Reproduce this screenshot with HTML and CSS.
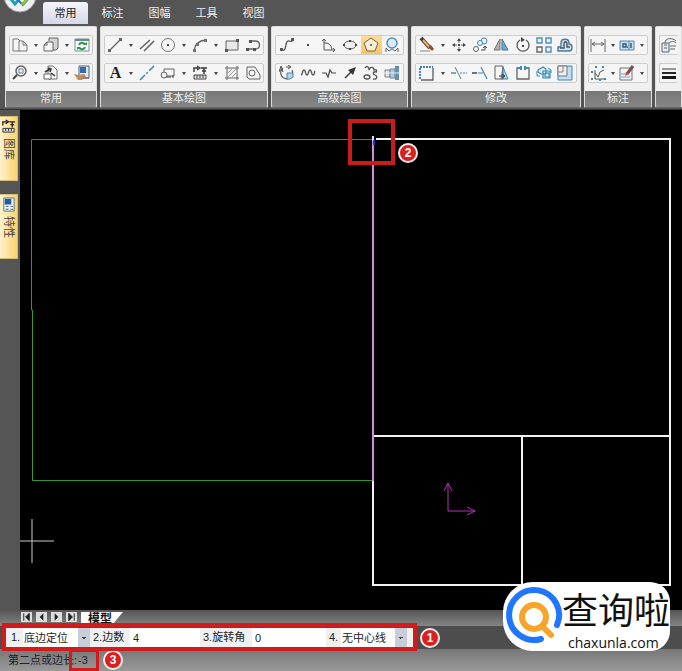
FILE: index.html
```html
<!DOCTYPE html>
<html lang="zh-CN">
<head>
<meta charset="utf-8">
<title>CAD</title>
<link rel="stylesheet" href="styles.css">
</head>
<body>
<div class="app">
<header class="topbar">
  <svg class="logo" viewBox="0 0 42 14" aria-hidden="true">
    <circle cx="20" cy="-4" r="16" fill="#eef0f1" stroke="#999" stroke-width="1"/>
    <path d="M10-2l5 6 6-7" fill="none" stroke="#1c9fc4" stroke-width="3"/>
    <path d="M16-2l7 7 7-8" fill="none" stroke="#2878b8" stroke-width="2"/>
    <path d="M22 5l6-7" stroke="#8fbd39" stroke-width="3"/>
  </svg>
  <nav class="tabs">
    <button class="tab active">常用</button><button class="tab">标注</button><button class="tab">图幅</button><button class="tab">工具</button><button class="tab">视图</button>
  </nav>
</header>

<div class="ribbon">
  <section class="group">
    <div class="rows">
      <div class="row">
        <button class="tool" aria-label="复制"><svg viewBox="0 0 16 16"><path d="M1 2h5l2 2v10H1z" fill="#f4f4f4" stroke="#666"/><path d="M7 4h4l4 4v6H7z" fill="#f4f4f4" stroke="#666"/><path d="M11 4v4h4" fill="none" stroke="#666"/></svg></button><button class="more" aria-label="更多"></button>
        <button class="tool" aria-label="粘贴"><svg viewBox="0 0 16 16"><path d="M6 4V1h9v10l-2 2h-3" fill="#d2d2d2" stroke="#555"/><path d="M1 8l3-3h6v9H1z" fill="#f4f4f4" stroke="#555"/><path d="M1 8h3V5" fill="none" stroke="#555"/></svg></button><button class="more" aria-label="更多"></button>
        <button class="tool" aria-label="刷新"><svg viewBox="0 0 16 16"><path d="M1 2h14v12H1z" fill="#fff" stroke="#688"/><path d="M1 2h14v2H1z" fill="#678"/><path d="M5 8c1-3 5-3 6 0M11 10c-1 3-5 3-6 0" fill="none" stroke="#16913c" stroke-width="2"/><path d="M9 8h4V5zM7 10H3v3z" fill="#16913c"/></svg></button>
      </div>
      <div class="row">
        <button class="tool" aria-label="缩放"><svg viewBox="0 0 16 16"><circle cx="9" cy="6" r="5" fill="#eef4f8" stroke="#555" stroke-width="1.5"/><path d="M7 4h4v4H7z" fill="none" stroke="#678"/><path d="M5 10l-4 4" stroke="#333" stroke-width="2"/></svg></button><button class="more" aria-label="更多"></button>
        <button class="tool" aria-label="图块"><svg viewBox="0 0 16 16"><path d="M5 1h5l4 4v9H5z" fill="#f4f4f4" stroke="#666"/><path d="M1 9h7v5H1z" fill="#fff" stroke="#555"/><path d="M2 7l5-3M5 3l3 1-1 3M8 8l4 3" fill="none" stroke="#222" stroke-width="1.5"/></svg></button><button class="more" aria-label="更多"></button>
        <button class="tool" aria-label="格式"><svg viewBox="0 0 16 16"><path d="M5 1h10v12H5z" fill="#d9e8f5" stroke="#456"/><path d="M6 2h6v6H6z" fill="#255ba0"/><path d="M0 9l5 1 5-1 2 2-4 4H4z" fill="#c57d46"/><path d="M9 13h6" stroke="#456"/></svg></button>
      </div>
    </div>
    <h2>常用</h2>
  </section>

  <section class="group">
    <div class="rows">
      <div class="row">
        <button class="tool" aria-label="直线"><svg viewBox="0 0 16 16"><path d="M2 14L14 2" stroke="#555" stroke-width="1.3"/><path d="M1 12h3v3H1zM12 1h3v3h-3z" fill="#555"/></svg></button><button class="more" aria-label="更多"></button>
        <button class="tool" aria-label="平行线"><svg viewBox="0 0 16 16"><path d="M1 12L11 3M5 14L15 4" stroke="#555" stroke-width="1.5"/></svg></button>
        <button class="tool" aria-label="圆"><svg viewBox="0 0 16 16"><circle cx="8" cy="8" r="6.5" fill="none" stroke="#666"/><path d="M7 7h2v2H7z" fill="#333"/></svg></button><button class="more" aria-label="更多"></button>
        <button class="tool" aria-label="圆弧"><svg viewBox="0 0 16 16"><path d="M2 14Q3 4 14 3" fill="none" stroke="#555" stroke-width="1.3"/><path d="M1 12h3v3H1zM12 2h3v3h-3zM4 6h3v3H4z" fill="#666"/></svg></button><button class="more" aria-label="更多"></button>
        <button class="tool" aria-label="矩形"><svg viewBox="0 0 16 16"><path d="M2 4h12v9H2z" fill="#e8e8e8" stroke="#555"/><path d="M12 2h3v3h-3zM1 12h3v3H1z" fill="#444"/></svg></button>
        <button class="tool" aria-label="多段线"><svg viewBox="0 0 16 16"><path d="M5 4h5c6 0 6 8 0 8H2" fill="none" stroke="#555" stroke-width="1.3"/><path d="M4 3h3v3H4zM1 11h3v3H1zM8 11h3v3H8z" fill="#444"/></svg></button>
      </div>
      <div class="row">
        <button class="tool letter" aria-label="文字">A</button><button class="more" aria-label="更多"></button>
        <button class="tool" aria-label="中心线"><svg viewBox="0 0 16 16"><path d="M1 15L15 1" stroke="#2878b4" stroke-width="1.5" stroke-dasharray="7 2 2 2"/></svg></button>
        <button class="tool" aria-label="局部放大"><svg viewBox="0 0 16 16"><path d="M4 4h10v7H4z" fill="none" stroke="#555"/><circle cx="4" cy="10" r="3" fill="#eee" stroke="#555"/><path d="M6 12h5M13 10v3" stroke="#333"/></svg></button><button class="more" aria-label="更多"></button>
        <button class="tool" aria-label="图库"><svg viewBox="0 0 16 16"><path d="M2 7V3h4M5 1l3 2-3 2M9 3h6M12 3v6M10 6h4" fill="none" stroke="#222" stroke-width="1.4"/><path d="M2 10h12v4H2z" fill="#ddd" stroke="#333"/><path d="M5 10v3M8 10v3M11 10v3" stroke="#333"/></svg></button><button class="more" aria-label="更多"></button>
        <button class="tool" aria-label="填充"><svg viewBox="0 0 16 16"><path d="M3 1v14M13 1v14M1 3h14M1 13h14" stroke="#555"/><path d="M4 8l4-4M4 12l8-8M8 12l4-4" stroke="#999"/></svg></button>
        <button class="tool" aria-label="轮廓"><svg viewBox="0 0 16 16"><path d="M2 2h8l5 8v4H4l-2-2z" fill="#f4f4f4" stroke="#555"/><circle cx="7" cy="8" r="3" fill="none" stroke="#555"/></svg></button>
      </div>
    </div>
    <h2>基本绘图</h2>
  </section>

  <section class="group">
    <div class="rows">
      <div class="row">
        <button class="tool" aria-label="样条"><svg viewBox="0 0 16 16"><path d="M2 13C9 16 5 3 10 4c3 1 4 0 4-3" fill="none" stroke="#444" stroke-width="1.3"/><path d="M1 11h3v3H1zM12 1h3v3h-3z" fill="#444"/></svg></button>
        <button class="tool" aria-label="点"><svg viewBox="0 0 16 16"><path d="M7 7h2v2H7z" fill="#333"/></svg></button>
        <button class="tool" aria-label="公式曲线"><svg viewBox="0 0 16 16"><path d="M3 2v11h11M1 4l2-2 2 2M12 11l2 2-2 2M3 6q7-1 8 7" fill="none" stroke="#444"/></svg></button>
        <button class="tool" aria-label="椭圆"><svg viewBox="0 0 16 16"><ellipse cx="8" cy="8" rx="6" ry="4" fill="#eee" stroke="#444"/><path d="M1 7h2v2H1zM13 7h2v2h-2zM7 3h2v2H7zM7 11h2v2H7z" fill="#333"/></svg></button>
        <button class="tool on" aria-label="正多边形"><svg viewBox="0 0 16 16"><path d="M8 1l7 5-3 8H4L1 6z" fill="#fff3d4" stroke="#665a48"/><path d="M7 7h2v2H7z" fill="#3779c4"/></svg></button>
        <button class="tool" aria-label="轴孔"><svg viewBox="0 0 16 16"><circle cx="8" cy="6" r="5" fill="#d7ebfa" stroke="#4783b0" stroke-width="1.5"/><path d="M2 15v-4l3 3 3-2 3 2 3-3v4" fill="none" stroke="#555"/></svg></button>
      </div>
      <div class="row">
        <button class="tool" aria-label="局部"><svg viewBox="0 0 16 16"><path d="M4 3a6 6 0 1 0 9 2" fill="none" stroke="#555" stroke-width="1.3"/><path d="M0 7l2-6 2 6M1 5h3M7 2h4M9 0l3 2-3 2" fill="none" stroke="#444"/><path d="M8 8h6v4l-3 2H8z" fill="#acd2ee" stroke="#44749a"/></svg></button>
        <button class="tool" aria-label="波浪线"><svg viewBox="0 0 16 16"><path d="M1 10c2 0 1-5 3-5s1 5 3 5 1-5 3-5 1 5 3 5 1-3 2-4" fill="none" stroke="#444" stroke-width="1.3"/></svg></button>
        <button class="tool" aria-label="双折线"><svg viewBox="0 0 16 16"><path d="M1 8h4l2 4 2-7 2 3h4" fill="none" stroke="#333" stroke-width="1.2"/></svg></button>
        <button class="tool" aria-label="箭头"><svg viewBox="0 0 16 16"><path d="M3 13l7-7" stroke="#222" stroke-width="1.5"/><path d="M14 2l-3 8-5-5z" fill="#222"/></svg></button>
        <button class="tool" aria-label="云线"><svg viewBox="0 0 16 16"><path d="M2 3c2-3 4-1 4 2 1-4 5-3 5 0 3-1 3 1 2 2" fill="none" stroke="#444" stroke-width="1.3"/><ellipse cx="4" cy="12" rx="3" ry="2" fill="none" stroke="#444" stroke-width="1.3"/><path d="M14 7c-4-1-5 2-2 3s2 5-2 4" fill="none" stroke="#444" stroke-width="1.3"/></svg></button>
        <button class="tool" aria-label="轴"><svg viewBox="0 0 16 16"><path d="M1 5h5v7H1z" fill="#d8e5ef" stroke="#777"/><path d="M6 4h5v9H6z" fill="#9fc7e2" stroke="#678"/><path d="M11 1h4v14h-4z" fill="#5585aa"/><path d="M0 8h16" stroke="#eee"/></svg></button>
      </div>
    </div>
    <h2>高级绘图</h2>
  </section>

  <section class="group">
    <div class="rows">
      <div class="row">
        <button class="tool" aria-label="删除"><svg viewBox="0 0 16 16"><path d="M2 1l9 10" stroke="#3d2b20" stroke-width="4"/><path d="M4 3l7 8" stroke="#e6aa58" stroke-width="2"/><path d="M9 10l3-2 3 4-2 2z" fill="#8b3d22"/><path d="M1 14h10" stroke="#777"/></svg></button><button class="more" aria-label="更多"></button>
        <button class="tool" aria-label="平移"><svg viewBox="0 0 16 16"><path d="M8 2v12M2 8h12" stroke="#555" stroke-dasharray="4 4"/><path d="M8 1l2 3H6zM8 15l2-3H6zM1 8l3-2v4zM15 8l-3-2v4zM7 7h2v2H7z" fill="#333"/></svg></button>
        <button class="tool" aria-label="平移复制"><svg viewBox="0 0 16 16"><g fill="#e8f2f8" stroke="#327caf"><circle cx="12" cy="4" r="3"/><circle cx="8" cy="6" r="2.5"/></g><circle cx="4" cy="12" r="2.5" fill="none" stroke="#555"/><path d="M9 13h4v-3M11 11l2-2 2 2" fill="none" stroke="#333"/></svg></button>
        <button class="tool" aria-label="镜像"><svg viewBox="0 0 16 16"><path d="M7 2v11H1z" fill="#aaa" stroke="#666"/><path d="M9 2v11h6z" fill="#65a4d0" stroke="#32668e"/></svg></button>
        <button class="tool" aria-label="旋转"><svg viewBox="0 0 16 16"><path d="M5 3a6 6 0 1 0 6 0" fill="none" stroke="#444" stroke-width="1.3"/><path d="M6 0v5l4-2zM7 8h2v2H7z" fill="#333"/></svg></button>
        <button class="tool" aria-label="阵列"><svg viewBox="0 0 16 16"><path d="M1 1h5v5H1zM10 1h5v5h-5zM10 10h5v5h-5z" fill="#eef7fd" stroke="#3c83b6" stroke-width="1.4"/><path d="M1 10h5v5H1z" fill="#fff" stroke="#555" stroke-width="1.4"/></svg></button>
        <button class="tool" aria-label="偏移"><svg viewBox="0 0 16 16"><path d="M1 14v-4h3V6c0-5 8-5 8 0v1c4 0 4 7 0 7z" fill="#c9e2f2" stroke="#346c95" stroke-width="1.4"/><path d="M3 11h4V7c0-3 3-3 3 0v3h3" fill="none" stroke="#444" stroke-width="1.4"/></svg></button>
      </div>
      <div class="row">
        <button class="tool" aria-label="裁剪"><svg viewBox="0 0 16 16"><path d="M1 14V2h13" fill="none" stroke="#2978b4" stroke-width="2" stroke-dasharray="2 1"/><path d="M14 3v12H2" fill="none" stroke="#555" stroke-width="1.4"/></svg></button><button class="more" aria-label="更多"></button>
        <button class="tool" aria-label="修剪"><svg viewBox="0 0 16 16"><path d="M4 2l6 12" stroke="#3579aa"/><path d="M0 8h5" stroke="#333"/><path d="M9 8h7" stroke="#3579aa" stroke-dasharray="2 1"/></svg></button>
        <button class="tool" aria-label="延伸"><svg viewBox="0 0 16 16"><path d="M0 8h5" stroke="#333" stroke-width="1.5"/><path d="M6 8h5M9 2l6 12" stroke="#3579aa" stroke-width="1.2"/></svg></button>
        <button class="tool" aria-label="拉伸"><svg viewBox="0 0 16 16"><path d="M10 2l5 12H8z" fill="#a9d2ee" stroke="#367caf"/><path d="M2 1h8v13H2z" fill="none" stroke="#555"/><path d="M6 11h5M9 9l3 2-3 2" fill="none" stroke="#222"/></svg></button>
        <button class="tool" aria-label="打断"><svg viewBox="0 0 16 16"><path d="M5 3H2v11h12V3h-3" fill="none" stroke="#555" stroke-width="1.3"/><path d="M2 3h4M10 3h4" stroke="#347fb5" stroke-width="2"/><path d="M5 1h2v4H5zM9 1h2v4H9z" fill="#347fb5"/></svg></button>
        <button class="tool" aria-label="分解"><svg viewBox="0 0 16 16"><path d="M2 5l5-3 3 2v5H5L2 7zM7 6h7v7H7z" fill="#d7edfa" stroke="#277bb0" stroke-width="1.2"/><path d="M9 8h4v4H9zM1 6v5h3M12 3l3 2v3" fill="none" stroke="#277bb0"/></svg></button>
        <button class="tool" aria-label="缩放图形"><svg viewBox="0 0 16 16"><path d="M1 1h14v14H1z" fill="#b7def4" stroke="#317bad"/><path d="M1 1h9v10H1z" fill="#eee" stroke="#666"/><path d="M6 1v6H1" fill="none" stroke="#777"/></svg></button>
      </div>
    </div>
    <h2>修改</h2>
  </section>

  <section class="group">
    <div class="rows">
      <div class="row">
        <button class="tool" aria-label="尺寸标注"><svg viewBox="0 0 16 16"><path d="M1 2v13M15 2v13M2 7h12M5 5L2 7l3 2M11 5l3 2-3 2" fill="none" stroke="#555"/></svg></button><button class="more" aria-label="更多"></button>
        <button class="tool" aria-label="形位公差"><svg viewBox="0 0 16 16"><path d="M1 4h14v9H1z" fill="#bddcf0" stroke="#477da6"/><path d="M10 4v9" stroke="#477da6"/><path d="M4 7h3v3H4zM12 6v5M8 10h1" fill="none" stroke="#246" stroke-width="1.4"/></svg></button><button class="more" aria-label="更多"></button>
      </div>
      <div class="row">
        <button class="tool" aria-label="坐标标注"><svg viewBox="0 0 16 16"><path d="M5 5v9h9M5 8l3 4 2-5 4-2" fill="none" stroke="#444"/><path d="M1 6h2v2H1zM1 13h2v2H1zM5 1h2v2H5zM12 1h2v2h-2zM9 14h2v2H9zM14 13h2v2h-2z" fill="#357cab"/></svg></button><button class="more" aria-label="更多"></button>
        <button class="tool" aria-label="标注编辑"><svg viewBox="0 0 16 16"><path d="M1 3h12v12H1z" fill="#edf3f7" stroke="#666"/><path d="M2 9h6M2 12h9" stroke="#6d9dbe"/><path d="M8 9l6-8" stroke="#6b3e35" stroke-width="3"/><path d="M6 11l1-4 3 2z" fill="#d33"/></svg></button><button class="more" aria-label="更多"></button>
      </div>
    </div>
    <h2>标注</h2>
  </section>

  <section class="group last">
    <div class="rows">
      <div class="row">
        <button class="tool" aria-label="图层"><svg viewBox="0 0 16 16"><path d="M1 6h7v9H1z" fill="#e2ebf1" stroke="#456"/><path d="M3 8h3M3 11h3M4 6c0-6 8-5 11-2M8 6c2-2 5-2 7 0M9 9h6M9 12h5" fill="none" stroke="#555"/></svg></button>
      </div>
      <div class="row">
        <button class="tool" aria-label="线宽"><svg viewBox="0 0 16 16"><path d="M1 4h14" stroke="#222"/><path d="M1 8h14" stroke="#111" stroke-width="2"/><path d="M1 12.500h14" stroke="#000" stroke-width="3"/></svg></button>
      </div>
    </div>
    <h2></h2>
  </section>
</div>

<main class="work">
  <aside class="side">
    <button class="dock"><svg viewBox="0 0 16 16"><path d="M2 7V3h4M5 1l3 2-3 2M9 3h6M12 3v6M10 6h4" fill="none" stroke="#222" stroke-width="1.4"/><path d="M2 10h12v4H2z" fill="#ddd" stroke="#333"/><path d="M5 10v3M8 10v3M11 10v3" stroke="#333"/></svg><span>图库</span></button>
    <button class="dock"><svg viewBox="0 0 16 16"><path d="M3 1h11v14H3z" fill="#edf3fa" stroke="#577"/><path d="M4 2h7v6H4z" fill="#245aa5"/><path d="M5 10h3M10 10h3M5 13h3M10 13h3" stroke="#557"/></svg><span>特性</span></button>
  </aside>
  <div class="canvas">
    <svg class="drawing" viewBox="0 0 662 500" preserveAspectRatio="xMinYMin meet" role="img" aria-label="绘图区">
      <path d="M353 29.500H11.500V200H12.500V370.500H353" fill="none" stroke="#2f9a33"/>
      <g fill="none" stroke="#f2f2f2" stroke-width="2"><path d="M356 29H650V475H353V370M353 326H650M502 326V475"/></g>
      <path d="M353 27V371" stroke="#d58bdc" stroke-width="2"/>
      <path d="M353 26v5" stroke="#dde" stroke-width="2"/><path d="M354 30v5" stroke="#2438c8" stroke-width="2"/>
      <path d="M428 401V374M424 381l4-8 4 8M428 401h27M447 397l8 4-8 4" fill="none" stroke="#b535b5"/>
      <path d="M12 409v44M0 431h34" stroke="#c8c8c8"/>
      <rect x="330" y="11" width="43" height="42" fill="none" stroke="#c91d1d" stroke-width="4"/>
      <circle cx="388" cy="43" r="9" fill="#d9201f" stroke="#f3eded" stroke-width="2"/>
      <text x="388" y="47" text-anchor="middle" class="mark">2</text>
    </svg>
  </div>
</main>

<div class="sheets">
  <button aria-label="首页"><svg viewBox="0 0 12 10"><path d="M3 1v8M9 1L5 5l4 4z" fill="#222" stroke="#222"/></svg></button>
  <button aria-label="上一页"><svg viewBox="0 0 12 10"><path d="M8 1L4 5l4 4z" fill="#222"/></svg></button>
  <button aria-label="下一页"><svg viewBox="0 0 12 10"><path d="M4 1l4 4-4 4z" fill="#222"/></svg></button>
  <button aria-label="末页"><svg viewBox="0 0 12 10"><path d="M9 1v8M3 1l4 4-4 4z" fill="#222" stroke="#222"/></svg></button>
  <button class="sheet">模型</button>
</div>

<div class="options">
  <form class="fields">
    <label for="pos">1.</label><select id="pos"><option>底边定位</option></select>
    <label for="sides">2.边数</label><input id="sides" value="4">
    <label for="angle">3.旋转角</label><input id="angle" value="0">
    <label for="center">4.</label><select id="center"><option>无中心线</option></select>
    <span class="frame"></span>
  </form>
  <span class="badge">1</span>
</div>
<footer class="status"><span>第二点或边长:</span><span class="value">-3</span><span class="badge">3</span></footer>

<div class="brand">
  <svg viewBox="0 0 56 56" aria-hidden="true"><path d="M51 36A25 25 0 1 0 35 50" fill="none" stroke="#2077ff" stroke-width="6" stroke-linecap="round"/><circle cx="28" cy="28" r="12" fill="none" stroke="#f7a42b" stroke-width="6"/><path d="M37 38l8 8" stroke="#f7a42b" stroke-width="6" stroke-linecap="round"/></svg>
  <div class="words"><strong>查询啦</strong><span>chaxunla.com</span></div>
</div>
</div>
</body>
</html>
```
FILE: styles.css
```css
* { box-sizing: border-box; }
body { margin: 0; background: #000; font: 11px/16px "Liberation Sans", "Noto Sans CJK SC", sans-serif; }
button, input, select { font: inherit; margin: 0; padding: 0; border: 0; border-radius: 0; color: inherit; background: none; }
.app { position: relative; display: flex; flex-direction: column; min-height: 100vh; overflow: hidden; }

.topbar { display: flex; height: 24px; background: #555; }
.logo { width: 42px; height: 14px; flex: none; }
.tabs { display: flex; gap: 2px; padding: 2px 0 0 1px; }
.tab { width: 45px; height: 22px; color: #eee; }
.tab.active { color: #222; background: linear-gradient(#f4f4fc, #d6d8e8); border-radius: 3px 3px 0 0; }

.ribbon { display: grid; grid-template-columns: 92px 168px 137px 170px 68px 1fr; gap: 3px; padding: 2px 0 1px 5px; background: #555; border-bottom: 1px solid #333; }
.group { min-width: 0; background: #f0f0f0; border: 1px solid #ddd; border-bottom-color: #666; border-radius: 2px; overflow: hidden; }
.rows { display: grid; gap: 8px; padding: 8px 3px; }
.row { display: flex; min-width: 0; height: 20px; border: 1px solid #ccc; border-radius: 2px; background: #f5f5f5; }
.last .row { border-right: 0; }
.last .tool { flex: none; }
.tool { flex: 1 1 18px; min-width: 18px; display: flex; align-items: center; justify-content: center; }
.tool svg { width: 16px; height: 16px; display: block; flex: none; opacity: .9; }
.tool.on { background: linear-gradient(#fbdc9d, #f8c668); }
.tool.letter { font: bold 16px/18px "Liberation Serif", serif; color: #222; }
.more { flex: 0 0 11px; display: flex; align-items: center; justify-content: center; }
.more::after { content: ""; border: 2px solid transparent; border-top: 3px solid #444; border-bottom: 0; }
.group h2 { margin: 0; height: 16px; font-size: 11px; line-height: 15px; font-weight: 400; text-align: center; color: #eee; background: linear-gradient(#777, #868686); }

.work { flex: 1; display: flex; min-height: 0; background: #000; }
.side { width: 20px; flex: none; display: flex; flex-direction: column; gap: 13px; padding: 6px 2px 0 0; background: #555; }
.dock { height: 65px; display: flex; flex-direction: column; align-items: center; gap: 4px; padding: 2px 0; color: #444; background: linear-gradient(90deg, #fff3cd, #f9d36d); border: 1px solid #d8bd75; border-left: 0; }
.dock svg { width: 15px; height: 15px; flex: none; }
.dock span { writing-mode: vertical-rl; text-orientation: sideways; line-height: 14px; }
.canvas { flex: 1; min-width: 0; }
.drawing { display: block; width: 100%; }
.mark { font: bold 12px "Liberation Sans", sans-serif; fill: #fff; }

.sheets { display: flex; align-items: flex-start; gap: 4px; height: 16px; padding: 2px 0 0 21px; background: linear-gradient(#555, #858585); }
.sheets button { width: 11px; height: 10px; background: #ddd; }
.sheets svg { display: block; width: 100%; height: 100%; }
.sheets .sheet { width: 42px; height: 14px; padding-right: 4px; font-size: 12px; font-weight: 700; line-height: 14px; color: #111; background: #fff; clip-path: polygon(0 0, 100% 0, 72% 100%, 0 100%); }

.options { display: flex; align-items: center; gap: 7px; height: 23px; background: #4d4d4d; }
.fields { position: relative; display: grid; grid-template-columns: 15px 67px 40px 70px 52px 74px 15px 66px; align-items: stretch; height: 19px; padding: 0 6px; margin-left: 2px; color: #222; background: #f0f0f0; }
.fields label { line-height: 18px; white-space: nowrap; padding-left: 3px; }
.fields input { min-width: 0; background: #fff; padding-left: 3px; }
.fields select { appearance: none; padding-left: 1px; background: conic-gradient(from -45deg at 50% 100%, #444 90deg, transparent 0) right 4px center / 4px 2px no-repeat, linear-gradient(#c8ced8, #c8ced8) right / 12px 100% no-repeat, #fff; }
.frame { position: absolute; inset: -5px -4px -4px 0; border: 4px solid #d01c1c; pointer-events: none; }
.badge { display: block; flex: none; width: 20px; height: 20px; border: 2px solid #f3eded; border-radius: 50%; background: #d9201f; color: #fff; font-weight: 700; font-size: 12px; line-height: 16px; text-align: center; }

.status { display: flex; align-items: center; height: 22px; padding-left: 8px; color: #222; background: linear-gradient(#777, #999); }
.value { display: flex; align-items: center; width: 30px; height: 22px; margin-left: -8px; padding-left: 6px; border: 3px solid #d01c1c; margin-right: 4px; }

.brand { position: absolute; right: 12px; bottom: 20px; display: flex; align-items: center; width: 167px; height: 69px; padding-left: 3px; background: #fff; border-radius: 30px 20px 20px 30px; color: #111; }
.brand svg { width: 56px; height: 56px; flex: none; overflow: visible; }
.words { display: flex; flex-direction: column; white-space: nowrap; }
.words strong { font: 400 36px/52px "Noto Sans CJK SC", sans-serif; }
.words span { padding-left: 6px; font: 14px/18px "Open Sans", sans-serif; }
```
